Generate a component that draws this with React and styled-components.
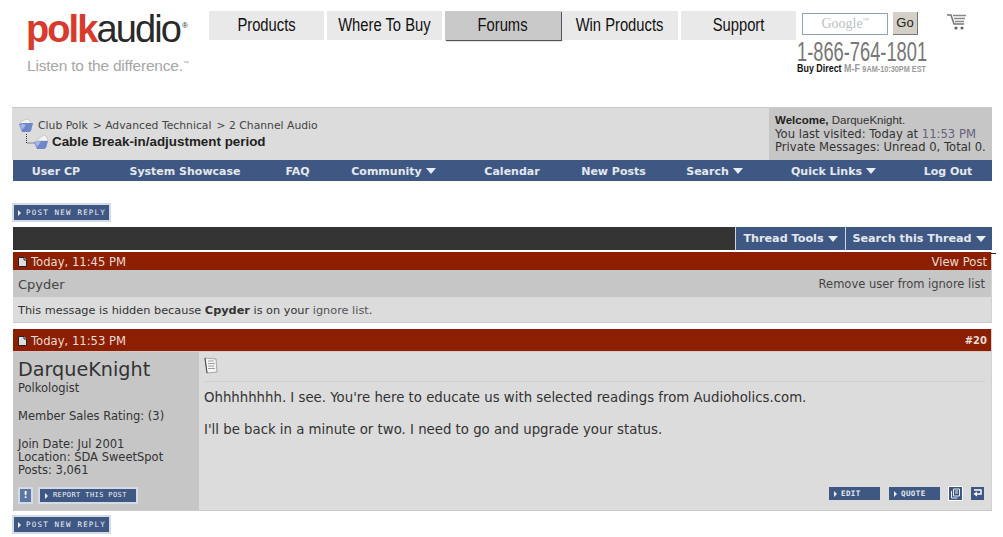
import React from "react";
import styled, { createGlobalStyle } from "styled-components";

const GlobalStyle = createGlobalStyle`
  html, body {
    margin: 0;
    padding: 0;
    background: #fff;
    font-family: "DejaVu Sans", Verdana, sans-serif;
    color: #333;
  }
  * { box-sizing: border-box; }
`;

const sans = `"Liberation Sans", Arial, sans-serif`;

const Page = styled.div`
  width: 1003px;
  height: 537px;
  overflow: hidden;
`;

/* top site header */
const Header = styled.header`
  display: flex;
  height: 107px;
  padding-left: 27px;
`;
const Brand = styled.div`
  width: 182px;
  flex: none;
  padding-top: 7px;
`;
const Logo = styled.div`
  font-family: ${sans};
  font-size: 38px;
  line-height: 44px;
  letter-spacing: -1.9px;
  margin-left: -1px;
  color: #2a2a2a;
  display: flex;
  align-items: baseline;
  b {
    color: #d93a2b;
    font-weight: 700;
  }
  sup {
    font-size: 8px;
    letter-spacing: 0;
    line-height: 0;
    margin-left: 2px;
    position: relative;
    top: -14px;
  }
`;
const Tagline = styled.div`
  font-family: ${sans};
  font-size: 15.5px;
  line-height: 18px;
  margin-top: 6px;
  color: #a6a6a6;
  white-space: nowrap;
  letter-spacing: -0.2px;
  sup {
    font-size: 6px;
    line-height: 0;
  }
`;
const Tabs = styled.nav`
  display: flex;
  height: 31px;
  margin-top: 11px;
  flex: none;
`;
const Tab = styled.a`
  width: ${(p) => p.$w}px;
  height: 29px;
  margin-right: ${(p) => p.$gap}px;
  background: ${(p) => (p.$active ? "#c9c9c9" : "#e9e9e9")};
  box-shadow: ${(p) => (p.$active ? "1px 1px 1px #555" : "none")};
  display: flex;
  align-items: center;
  justify-content: center;
  font-family: ${sans};
  font-size: 18px;
  color: #111;
`;
const Squeezed = styled.span`
  display: inline-block;
  white-space: nowrap;
  transform: scaleX(${(p) => p.$x});
  transform-origin: ${(p) => p.$origin || "center"};
`;
const Tools = styled.div`
  width: 170px;
  margin-left: 1px;
  padding-top: 12px;
  flex: none;
`;
const SearchRow = styled.div`
  display: flex;
  align-items: flex-start;
  height: 28px;
`;
const GoogleBox = styled.div`
  width: 86px;
  height: 22px;
  margin: 1px 5px 0 5px;
  border: 1px solid #8fa3ad;
  background: #fff;
  font-family: "Liberation Serif", serif;
  font-size: 14px;
  line-height: 20px;
  text-align: center;
  color: #b9bfc4;
  sup {
    font-size: 6px;
    line-height: 0;
  }
`;
const GoButton = styled.div`
  width: 25px;
  height: 23px;
  background: #d4d0c8;
  border-right: 1px solid #777;
  border-bottom: 1px solid #777;
  font-family: ${sans};
  font-size: 13px;
  line-height: 21px;
  text-align: center;
  color: #222;
`;
const Cart = styled.svg`
  width: 19px;
  height: 16px;
  margin: 2px 0 0 29px;
`;
const Phone = styled.div`
  font-family: ${sans};
  font-size: 28px;
  line-height: 23px;
  color: #777;
`;
const BuyDirect = styled.div`
  font-family: ${sans};
  font-size: 11px;
  line-height: 10px;
  font-weight: 700;
  color: #999;
  b { color: #111; }
  small { font-size: 9px; }
`;

/* forum body */
const Forum = styled.main`
  width: 980px;
  margin-left: 12px;
`;
const Crumbs = styled.section`
  display: flex;
  height: 53px;
  border-top: 1px solid #c9c9c9;
  background: #dcdcdc;
`;
const CrumbLeft = styled.div`
  flex: 1;
  padding: 10px 0 0 6px;
`;
const CrumbLine = styled.div`
  display: flex;
  align-items: center;
  height: 15px;
  font-size: 10.8px;
  color: #444;
  svg { margin-right: 4px; }
  span { margin-right: 5px; }
`;
const ThreadLine = styled.div`
  display: flex;
  align-items: center;
  height: 17px;
  margin-left: 6px;
  font-family: ${sans};
  font-size: 13.4px;
  font-weight: 700;
  color: #222;
  svg { margin-right: 2px; }
`;
const Welcome = styled.div`
  width: 223px;
  background: #c6c6c6;
  padding: 6px 0 0 6px;
  font-size: 11.6px;
  line-height: 13.5px;
  color: #333;
  white-space: nowrap;
  em { font-style: normal; color: #66607c; }
`;
const WelcomeLine = styled.div`
  font-family: ${sans};
  font-size: 11.5px;
  strong { font-weight: 700; color: #222; }
`;
const NavBar = styled.nav`
  display: grid;
  grid-template-columns: 86px 172px 53px 139px 98px 105px 97px 141px 88px;
  height: 21px;
  margin-left: 1px;
  width: 979px;
  padding-top: 1px;
  background: #3f5783;
`;
const NavItem = styled.a`
  display: flex;
  align-items: center;
  justify-content: center;
  font-size: 11px;
  font-weight: 700;
  color: #e4e8f0;
  white-space: nowrap;
`;
const Arrow = styled.i`
  display: inline-block;
  margin-left: 4px;
  border-left: 5px solid transparent;
  border-right: 5px solid transparent;
  border-top: 6px solid #e8ecf4;
`;
const ButtonRow = styled.div`
  display: flex;
  align-items: flex-start;
  padding: ${(p) => p.$top}px 0 0 2px;
  height: ${(p) => p.$h}px;
`;
const PixelButton = styled.a`
  display: inline-flex;
  align-items: center;
  flex: none;
  width: ${(p) => p.$w}px;
  height: ${(p) => p.$h}px;
  padding-left: ${(p) => p.$pad || 4}px;
  background: #3f5783;
  outline: 2px solid #d4dbe6;
  font-family: "DejaVu Sans Mono", monospace;
  font-size: ${(p) => p.$size || 7.5}px;
  letter-spacing: ${(p) => p.$spacing}px;
  color: #eef1f6;
  white-space: nowrap;
  &::before {
    content: "";
    flex: none;
    margin-right: 5px;
    border-left: 3px solid #e8ecf4;
    border-top: 3px solid transparent;
    border-bottom: 3px solid transparent;
  }
`;
const Toolbar = styled.div`
  display: flex;
  justify-content: flex-end;
  height: 23px;
  margin-left: 1px;
  background: #333;
`;
const ToolItem = styled.a`
  display: flex;
  align-items: center;
  justify-content: center;
  width: ${(p) => p.$w}px;
  background: #3f5783;
  border-left: 1px solid #cfd6e2;
  font-size: 11.2px;
  font-weight: 700;
  color: #e4e8f0;
  white-space: nowrap;
`;
const Post = styled.article`
  margin: ${(p) => p.$top}px 0 0 1px;
  border-bottom: 1px solid #c9c9c9;
  border-right: 1px solid #d2d2d2;
`;
const PostHead = styled.div`
  position: relative;
  display: flex;
  align-items: center;
  justify-content: space-between;
  height: ${(p) => p.$h}px;
  padding: 1px 4px 0 5px;
  background: #8c1f00;
  font-size: 11.6px;
  color: #eadcd6;
  svg { margin-right: 4px; }
  span { display: flex; align-items: center; }
  b { font-size: 10px; }
`;
const Tick = styled.i`
  position: absolute;
  left: 100%;
  top: 1px;
  width: 5px;
  height: 1px;
  background: #222;
`;
const IgnoreRow = styled.div`
  display: flex;
  align-items: center;
  justify-content: space-between;
  height: 27px;
  padding: 1px 6px 0 5px;
  background: #c6c6c6;
  font-size: 11.5px;
  color: #444;
`;
const Cpyder = styled.span`
  font-size: 13px;
`;
const IgnoreMsg = styled.div`
  height: 25px;
  padding: 6px 5px 0;
  background: #dcdcdc;
  font-size: 11.3px;
  line-height: 15px;
  color: #333;
  a { color: #555; }
`;
const PostBody = styled.div`
  display: grid;
  grid-template-columns: 186px 1fr;
  height: 159px;
  border-top: 1px solid #d9c7c1;
`;
const UserCol = styled.aside`
  display: flex;
  flex-direction: column;
  background: #c6c6c6;
  padding: 6px 5px 0;
  font-size: 11.5px;
  line-height: 13px;
  color: #333;
`;
const UserName = styled.div`
  font-size: 19.2px;
  line-height: 24px;
  color: #333;
`;
const UserBlock = styled.div`
  margin-top: ${(p) => p.$top}px;
  white-space: nowrap;
`;
const UserActions = styled.div`
  display: flex;
  align-items: center;
  gap: 9px;
  margin-top: 12px;
  padding-left: 2px;
`;
const Alert = styled.a`
  width: 11px;
  height: 13px;
  background: #5c76a4;
  outline: 2px solid #d4dbe6;
  color: #fff;
  font-size: 9px;
  font-weight: 700;
  line-height: 13px;
  text-align: center;
`;
const MessageCol = styled.div`
  display: flex;
  flex-direction: column;
  background: #dcdcdc;
  padding: 5px 6px 0 5px;
  font-size: 13.3px;
  color: #333;
`;
const PostIcon = styled.div`
  height: 25px;
  border-bottom: 1px solid #cfcfcf;
`;
const MessageLine = styled.p`
  margin: ${(p) => p.$top}px 0 0;
  line-height: 16px;
  white-space: nowrap;
`;
const PostActions = styled.div`
  display: flex;
  align-items: center;
  justify-content: flex-end;
  margin-top: auto;
  height: 23px;
  padding-bottom: 10px;
`;
const ActionButton = styled.a`
  display: inline-flex;
  align-items: center;
  width: 51px;
  height: 13px;
  margin-right: ${(p) => p.$gap}px;
  padding-left: 5px;
  background: #3f5783;
  font-family: "DejaVu Sans Mono", monospace;
  font-size: 7.5px;
  font-weight: 700;
  letter-spacing: 0.4px;
  color: #e4e8f0;
  &::before {
    content: "";
    margin-right: 4px;
    border-left: 3px solid #e8ecf4;
    border-top: 3px solid transparent;
    border-bottom: 3px solid transparent;
  }
`;
const IconButton = styled.a`
  display: flex;
  align-items: center;
  justify-content: center;
  width: 13px;
  height: 13px;
  margin-right: ${(p) => p.$gap}px;
  background: #3f5783;
  outline: ${(p) => (p.$framed ? "1px solid #fff" : "none")};
`;

const FolderIcon = () => (
  <svg width="16" height="15" viewBox="0 0 16 15">
    <path d="M3 3l7-2 2 2 1 3H3z" fill="#f3f3f3" stroke="#b5b5b5" strokeWidth=".6" />
    <path d="M1 6l4-1h10l-2 8-2 1H4z" fill="#6f86c8" />
    <path d="M2 7l3-1 3 1-4 5z" fill="#a6b6e6" />
  </svg>
);
const ThreadIcon = () => (
  <svg width="26" height="16" viewBox="0 0 26 16">
    <path d="M2.5 0v9h8" fill="none" stroke="#333" strokeWidth="1" strokeDasharray="1 1" />
    <path d="M14 5l6-4 3 2 1 4H14z" fill="#f3f3f3" stroke="#b5b5b5" strokeWidth=".6" />
    <path d="M10 8l4-1h10l-2 7-2 1H13z" fill="#6f86c8" />
    <path d="M11 8l3-1 3 1-4 5z" fill="#a6b6e6" />
  </svg>
);
const PageIcon = () => (
  <svg width="9" height="10" viewBox="0 0 9 10">
    <path d="M.5.5h5.5l2.5 2.5v6.5h-8z" fill="#ddd" stroke="#222" />
    <path d="M6 .5v2.5h2.5" fill="#fff" stroke="#222" />
  </svg>
);
const NoteIcon = () => (
  <svg width="14" height="18" viewBox="0 0 14 18">
    <path d="M1 1l11 1 1 13-10 1z" fill="#f6f6f6" stroke="#888" strokeWidth=".7" />
    <path d="M4 4h6M4 6.5h7M4 9h6M4 11.5h7" stroke="#888" strokeWidth=".8" />
    <path d="M1 1l2 15" stroke="#444" strokeWidth="1" />
  </svg>
);
const CartIcon = () => (
  <Cart viewBox="0 0 19 16">
    <path d="M0 1h4l3 9h10" fill="none" stroke="#777" strokeWidth="1.6" />
    <path d="M6 1.5h13M7 4.5h11M8 7.5h9" stroke="#888" strokeWidth="1.4" />
    <circle cx="9" cy="14" r="1.6" fill="#666" />
    <circle cx="15" cy="14" r="1.6" fill="#666" />
  </Cart>
);
const MultiQuoteIcon = () => (
  <svg width="11" height="11" viewBox="0 0 11 11">
    <path d="M3.5 1h6v7h-6zM1.5 3v7h6" fill="none" stroke="#e8ecf4" />
    <path d="M5 3h3M5 5h3" stroke="#e8ecf4" />
  </svg>
);
const ReplyIcon = () => (
  <svg width="11" height="11" viewBox="0 0 11 11">
    <path d="M2 2h7v4H4" fill="none" stroke="#fff" strokeWidth="1.4" />
    <path d="M5 3.5v5L1.5 6z" fill="#fff" />
  </svg>
);

const tabs = [
  { label: "Products", w: 115, gap: 3 },
  { label: "Where To Buy", w: 115, gap: 3 },
  { label: "Forums", w: 116, gap: 1, active: true },
  { label: "Win Products", w: 116, gap: 3 },
  { label: "Support", w: 115, gap: 0 },
];

const navItems = [
  { label: "User CP" },
  { label: "System Showcase" },
  { label: "FAQ" },
  { label: "Community", menu: true },
  { label: "Calendar" },
  { label: "New Posts" },
  { label: "Search", menu: true },
  { label: "Quick Links", menu: true },
  { label: "Log Out" },
];

export default function App() {
  return (
    <Page>
      <GlobalStyle />
      <Header>
        <Brand>
          <Logo>
            <b>polk</b>audio<sup>®</sup>
          </Logo>
          <Tagline>
            Listen to the difference.<sup>™</sup>
          </Tagline>
        </Brand>
        <Tabs>
          {tabs.map((tab) => (
            <Tab key={tab.label} $w={tab.w} $gap={tab.gap} $active={tab.active}>
              <Squeezed $x={0.82}>{tab.label}</Squeezed>
            </Tab>
          ))}
        </Tabs>
        <Tools>
          <SearchRow>
            <GoogleBox>
              Google<sup>™</sup>
            </GoogleBox>
            <GoButton>Go</GoButton>
            <CartIcon />
          </SearchRow>
          <Phone>
            <Squeezed $x={0.653} $origin="left">1-866-764-1801</Squeezed>
          </Phone>
          <BuyDirect>
            <Squeezed $x={0.81} $origin="left">
              <b>Buy Direct</b> M-F <small>9AM-10:30PM EST</small>
            </Squeezed>
          </BuyDirect>
        </Tools>
      </Header>

      <Forum>
        <Crumbs>
          <CrumbLeft>
            <CrumbLine>
              <FolderIcon />
              <span>Club Polk</span>
              <span>&gt; Advanced Technical</span>
              <span>&gt; 2 Channel Audio</span>
            </CrumbLine>
            <ThreadLine>
              <ThreadIcon />
              Cable Break-in/adjustment period
            </ThreadLine>
          </CrumbLeft>
          <Welcome>
            <WelcomeLine>
              <strong>Welcome,</strong> DarqueKnight.
            </WelcomeLine>
            You last visited: Today at <em>11:53 PM</em>
            <br />
            Private Messages: Unread 0, Total 0.
          </Welcome>
        </Crumbs>
        <NavBar>
          {navItems.map((item) => (
            <NavItem key={item.label}>
              {item.label}
              {item.menu && <Arrow />}
            </NavItem>
          ))}
        </NavBar>

        <ButtonRow $top={24} $h={46}>
          <PixelButton $w={95} $h={15} $spacing={1.2}>POST NEW REPLY</PixelButton>
        </ButtonRow>

        <Toolbar>
          <ToolItem $w={110}>Thread Tools<Arrow /></ToolItem>
          <ToolItem $w={147}>Search this Thread<Arrow /></ToolItem>
        </Toolbar>

        <Post $top={2}>
          <PostHead $h={18}>
            <Tick />
            <span><PageIcon />Today, 11:45 PM</span>
            <span>View Post</span>
          </PostHead>
          <IgnoreRow>
            <Cpyder>Cpyder</Cpyder>
            <span>Remove user from ignore list</span>
          </IgnoreRow>
          <IgnoreMsg>
            This message is hidden because <b>Cpyder</b> is on your <a>ignore list</a>.
          </IgnoreMsg>
        </Post>

        <Post $top={6}>
          <PostHead $h={22}>
            <span><PageIcon />Today, 11:53 PM</span>
            <b>#20</b>
          </PostHead>
          <PostBody>
            <UserCol>
              <UserName>DarqueKnight</UserName>
              <UserBlock $top={0}>Polkologist</UserBlock>
              <UserBlock $top={15}>Member Sales Rating: (3)</UserBlock>
              <UserBlock $top={15}>
                Join Date: Jul 2001
                <br />
                Location: SDA SweetSpot
                <br />
                Posts: 3,061
              </UserBlock>
              <UserActions>
                <Alert>!</Alert>
                <PixelButton $w={96} $h={13} $pad={5} $size={7} $spacing={0.4}>REPORT THIS POST</PixelButton>
              </UserActions>
            </UserCol>
            <MessageCol>
              <PostIcon><NoteIcon /></PostIcon>
              <MessageLine $top={8}>
                Ohhhhhhhh. I see. You're here to educate us with selected readings from Audioholics.com.
              </MessageLine>
              <MessageLine $top={16}>
                I'll be back in a minute or two. I need to go and upgrade your status.
              </MessageLine>
              <PostActions>
                <ActionButton $gap={9}>EDIT</ActionButton>
                <ActionButton $gap={9}>QUOTE</ActionButton>
                <IconButton $framed $gap={9}><MultiQuoteIcon /></IconButton>
                <IconButton $gap={1}><ReplyIcon /></IconButton>
              </PostActions>
            </MessageCol>
          </PostBody>
        </Post>

        <ButtonRow $top={6} $h={26}>
          <PixelButton $w={95} $h={15} $spacing={1.2}>POST NEW REPLY</PixelButton>
        </ButtonRow>
      </Forum>
    </Page>
  );
}
